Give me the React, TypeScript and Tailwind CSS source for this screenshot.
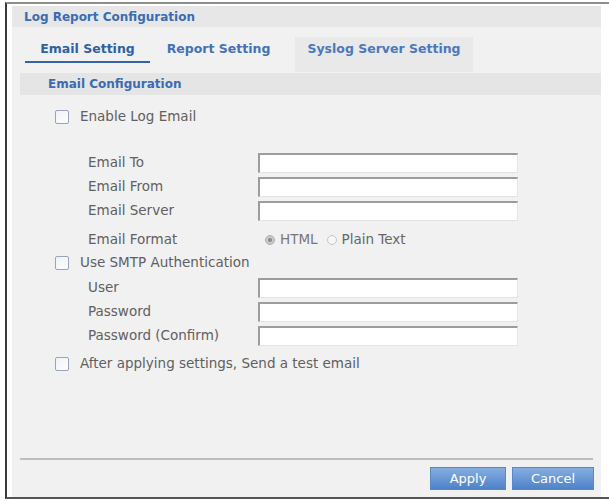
import React from "react";

const Check = ({ label }: { label: string }) => (
  <div className="flex items-center h-5 pl-[43px]">
    <span className="w-[14px] h-[14px] border border-[#9aa3bd] bg-gradient-to-br from-[#eef1fa] to-[#ffffff] rounded-[2px]" />
    <span className="ml-[11px] text-[#606060]">{label}</span>
  </div>
);

const Field = ({ label }: { label: string }) => (
  <div className="flex items-center h-5">
    <span className="w-[246px] pl-[76px] text-[#606060] whitespace-nowrap">{label}</span>
    <input
      className="w-[260px] h-5 bg-white border-t-2 border-l-2 border-t-[#9c9c9c] border-l-[#9c9c9c] border-r border-b border-r-[#e4e4e4] border-b-[#e4e4e4] outline-none"
      type="text"
    />
  </div>
);

const App = () => {
  return (
    <div className="w-[609px] h-[501px] bg-white pt-[2px] pl-[5px] pb-[2px] font-['DejaVu_Sans',sans-serif] text-[13.5px] leading-none">
      <div className="h-full flex border-t-2 border-l-2 border-b-2 border-t-[#8e8e8e] border-l-[#3a3a3a] border-b-[#555]">
        <div className="flex-1 pl-[5px] pt-[2px] pr-[8px] flex">
          <div className="flex-1 flex flex-col bg-[#f1f1f1]">
            {/* title bar */}
            <div className="h-[21px] bg-[#e7e7e7] flex items-center pl-[12px] text-[#3a6cb2] font-bold text-[12px]">
              Log Report Configuration
            </div>

            {/* tabs */}
            <div className="h-[45px] flex items-start pt-[10px] pl-[13px] text-[12.5px] font-bold">
              <div className="h-[26px] w-[125px] flex justify-center pt-[6px] border-b-2 border-[#3463a6] text-[#2f5fa6]">
                Email Setting
              </div>
              <div className="h-[35px] w-[137px] flex justify-center pt-[6px] text-[#4372b8]">
                Report Setting
              </div>
              <div className="ml-[8px] h-[35px] w-[178px] flex justify-center pt-[6px] bg-[#e9e9e9] text-[#4a78bd]">
                Syslog Server Setting
              </div>
            </div>

            {/* section header */}
            <div className="ml-[8px] mt-[1px] h-[22px] bg-[#e5e5e5] flex items-center pl-[28px] text-[#3a6cb2] font-bold text-[12px]">
              Email Configuration
            </div>

            <div className="pt-[12px]">
              <Check label="Enable Log Email" />
            </div>

            <div className="mt-[26px] flex flex-col gap-[4px]">
              <Field label="Email To" />
              <Field label="Email From" />
              <Field label="Email Server" />
            </div>

            <div className="mt-[9px] flex items-center h-5">
              <span className="w-[246px] pl-[76px] text-[#606060]">Email Format</span>
              <span className="ml-[7px] w-[10px] h-[10px] rounded-full bg-[#c9c9c9] border border-[#b0b0b0] flex items-center justify-center">
                <span className="w-[4px] h-[4px] rounded-full bg-[#8a8a8a]" />
              </span>
              <span className="ml-[5px] text-[#777]">HTML</span>
              <span className="ml-[9px] w-[10px] h-[10px] rounded-full bg-[#f7f7f7] border border-[#c6c6c6]" />
              <span className="ml-[5px] text-[#666]">Plain Text</span>
            </div>

            <div className="mt-[3px]">
              <Check label="Use SMTP Authentication" />
            </div>

            <div className="mt-[5px] flex flex-col gap-[4px]">
              <Field label="User" />
              <Field label="Password" />
              <Field label="Password (Confirm)" />
            </div>

            <div className="mt-[8px]">
              <Check label="After applying settings, Send a test email" />
            </div>

            <div className="flex-1" />

            {/* footer */}
            <div className="mx-[8px] h-[2px] bg-[#bdbdbd]" />
            <div className="h-[37px] flex items-start justify-end pt-[7px] pr-[7px] gap-[6px]">
              <button className="w-[76px] h-[23px] bg-gradient-to-b from-[#86aee2] to-[#4e82c8] border border-[#5b88c4] text-white text-[13px]">
                Apply
              </button>
              <button className="w-[82px] h-[23px] bg-gradient-to-b from-[#86aee2] to-[#4e82c8] border border-[#5b88c4] text-white text-[13px]">
                Cancel
              </button>
            </div>
          </div>
        </div>
      </div>
    </div>
  );
};

export default App;
